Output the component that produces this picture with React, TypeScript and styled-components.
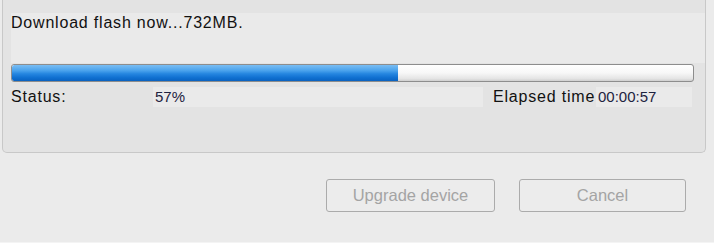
import React from 'react'
import styled, { createGlobalStyle } from 'styled-components'

const GlobalStyle = createGlobalStyle`
    html, body {
        margin: 0;
        padding: 0;
        background: #ebebeb;
    }
    body {
        font-family: "Liberation Sans", Arial, sans-serif;
    }
`

const Window = styled.div`
    width: 714px;
    height: 243px;
    overflow: hidden;
    box-sizing: border-box;
    border-bottom: 1px solid #f4f4f4;
    padding-bottom: 3px;
`

const GroupBox = styled.div`
    box-sizing: border-box;
    height: 153px;
    margin: 0 8px 0 2px;
    padding: 13px 0 0 7px;
    background: #e3e3e3;
    border: 1px solid #c8c8c8;
    border-top: none;
    border-radius: 0 0 5px 5px;
`

const Message = styled.div`
    height: 50px;
    margin-left: 1px;
    padding-top: 1px;
    box-sizing: border-box;
    background: #eaeaea;
    font-size: 16px;
    line-height: 17px;
    letter-spacing: 0.8px;
    color: #111;
`

const ProgressTrack = styled.div`
    box-sizing: border-box;
    width: 683px;
    height: 18px;
    margin: 1px 0 0 1px;
    border: 1px solid #8d8d8d;
    border-radius: 3px;
    overflow: hidden;
    background: linear-gradient(to bottom, #ffffff 0%, #f7f7f7 50%, #e4e4e4 85%, #cfcfcf 100%);
`

const ProgressFill = styled.div<{ $value: number }>`
    height: 100%;
    width: ${p => p.$value}%;
    border-radius: 2px 0 0 2px;
    background: linear-gradient(to bottom, #79bdf3 0%, #4aa2ec 35%, #2586e0 55%, #0f6fd0 80%, #0a62c0 100%);
`

const StatusRow = styled.div`
    display: grid;
    grid-template-columns: 142px 330px 10px 103px 96px;
    height: 20px;
    margin: 5px 0 0 1px;
    align-items: stretch;
`

const Label = styled.span`
    font-size: 16px;
    line-height: 20px;
    letter-spacing: 0.8px;
    color: #111;
    white-space: nowrap;
`

const Value = styled.span`
    background: #eaeaea;
    font-size: 15px;
    line-height: 20px;
    color: #1e2340;
    padding-left: 2px;
    white-space: nowrap;
`

const ButtonBar = styled.div`
    display: flex;
    justify-content: flex-end;
    gap: 24px;
    padding: 26px 28px 0 0;
`

const DialogButton = styled.button<{ $width: number }>`
    box-sizing: border-box;
    width: ${p => p.$width}px;
    height: 33px;
    padding: 0;
    background: #ececec;
    border: 1px solid #ababab;
    border-radius: 3px;
    font-family: "Liberation Sans", Arial, sans-serif;
    font-size: 16.5px;
    color: #a4a4a4;
`

function App() {
    return (
        <>
            <GlobalStyle />
            <Window>
                <GroupBox>
                    <Message>Download flash now...732MB.</Message>
                    <ProgressTrack>
                        <ProgressFill $value={56.7} />
                    </ProgressTrack>
                    <StatusRow>
                        <Label>Status:</Label>
                        <Value>57%</Value>
                        <span />
                        <Label>Elapsed time</Label>
                        <Value>00:00:57</Value>
                    </StatusRow>
                </GroupBox>
                <ButtonBar>
                    <DialogButton $width={169} disabled>Upgrade device</DialogButton>
                    <DialogButton $width={167} disabled>Cancel</DialogButton>
                </ButtonBar>
            </Window>
        </>
    )
}

export default App
